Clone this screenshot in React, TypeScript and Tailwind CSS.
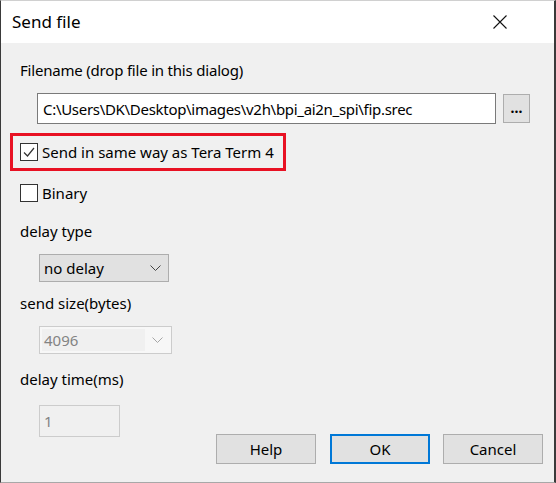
import React from 'react';

function Chevron({ color = '#444' }: { color?: string }) {
  return (
    <svg width="11" height="6" viewBox="0 0 11 6" fill="none">
      <path d="M0.5 0.5 L5.5 5.5 L10.5 0.5" stroke={color} strokeWidth="1" />
    </svg>
  );
}

function CheckBox({ checked }: { checked?: boolean }) {
  return (
    <div className="w-[18px] h-[18px] border border-[#333333] bg-white flex items-center justify-center shrink-0">
      {checked && (
        <svg width="14" height="14" viewBox="0 0 14 14" fill="none">
          <path d="M2 7.5 L5.5 11 L12 3" stroke="#333333" strokeWidth="1.2" />
        </svg>
      )}
    </div>
  );
}

function DlgButton({ label, primary }: { label: string; primary?: boolean }) {
  return (
    <button
      className={
        primary
          ? 'w-[100px] h-[30px] bg-[#e1e1e1] border-2 border-[#0078d7] text-[15px] text-black'
          : 'w-[100px] h-[30px] bg-[#e1e1e1] border border-[#adadad] text-[15px] text-black'
      }
    >
      {label}
    </button>
  );
}

export default function App() {
  return (
    <div
      className="w-[556px] h-[483px] bg-[#f0f0f0] border-l border-l-[#3a3a3a] border-r-2 border-r-[#3a3a3a] border-t border-t-[#d0d0d0] border-b border-b-[#a8a8a8] flex flex-col text-black"
      style={{ fontFamily: '"Noto Sans", "Open Sans", sans-serif' }}
    >
      {/* Title bar */}
      <div className="h-[42px] bg-white flex items-center justify-between pl-[11px] pr-[47px] shrink-0">
        <span className="text-[17px] leading-[24px]">Send file</span>
        <svg width="14" height="14" viewBox="0 0 14 14" fill="none">
          <path d="M0.5 0.5 L13.5 13.5 M13.5 0.5 L0.5 13.5" stroke="#111" strokeWidth="1.1" />
        </svg>
      </div>

      <div className="flex flex-col pl-[19px] pr-[11px] text-[15px] leading-[20px]">
        <div className="mt-[17px] tracking-[-0.2px]">Filename (drop file in this dialog)</div>

        <div className="mt-[13px] flex items-center ml-[17px]">
          <div className="w-[459px] h-[31px] bg-white border border-[#7a7a7a] flex items-center pl-[5px] tracking-[-0.3px]">
            C:\Users\DK\Desktop\images\v2h\bpi_ai2n_spi\fip.srec
          </div>
          <button className="ml-[7px] w-[27px] h-[29px] bg-[#e1e1e1] border border-[#adadad] flex items-end justify-center pb-[7px] text-[14px] leading-[14px] font-bold">
            ...
          </button>
        </div>

        <div className="mt-[9px] -ml-[10px] w-[276px] h-[38px] border-[3px] border-[#e81123] flex items-center pl-[7px]">
          <CheckBox checked />
          <span className="ml-[4px]">Send in same way as Tera Term 4</span>
        </div>

        <div className="mt-[12px] flex items-center">
          <CheckBox />
          <span className="ml-[4px]">Binary</span>
        </div>

        <div className="mt-[18px]">delay type</div>
        <div className="mt-[13px] ml-[19px] w-[130px] h-[28px] bg-[#e1e1e1] border border-[#adadad] flex items-center justify-between pl-[4px] pr-[7px]">
          <span>no delay</span>
          <Chevron />
        </div>

        <div className="mt-[11px]">send size(bytes)</div>
        <div className="mt-[13px] ml-[19px] w-[133px] h-[28px] bg-[#f7f7f7] border border-[#cccccc] flex items-center p-[2px]">
          <div className="w-[103px] h-full bg-[#f0f0f0] flex items-center pl-[2px] text-[#838383]">4096</div>
          <div className="flex-1 flex justify-center">
            <Chevron color="#a6a6a6" />
          </div>
        </div>

        <div className="flex justify-between items-start">
          <div className="flex flex-col">
            <div className="mt-[15px]">delay time(ms)</div>
            <div className="mt-[16px] ml-[19px] w-[81px] h-[32px] bg-[#f0f0f0] border border-[#cccccc] flex items-center pl-[4px] text-[#838383]">
              1
            </div>
          </div>
          <div className="mt-[80px] flex">
            <DlgButton label="Help" />
            <div className="ml-[14px]">
              <DlgButton label="OK" primary />
            </div>
            <div className="ml-[13px]">
              <DlgButton label="Cancel" />
            </div>
          </div>
        </div>
      </div>
    </div>
  );
}
